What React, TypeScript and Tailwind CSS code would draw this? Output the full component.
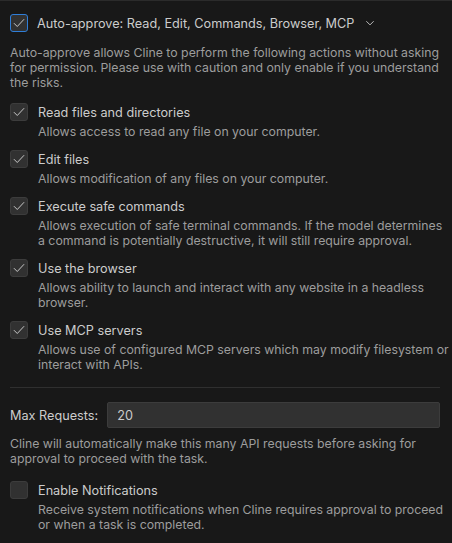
import React from 'react';

const items = [
  { label: 'Read files and directories', desc: ['Allows access to read any file on your computer.'], checked: true },
  { label: 'Edit files', desc: ['Allows modification of any files on your computer.'], checked: true },
  {
    label: 'Execute safe commands',
    desc: [
      'Allows execution of safe terminal commands. If the model determines',
      'a command is potentially destructive, it will still require approval.',
    ],
    checked: true,
  },
  {
    label: 'Use the browser',
    desc: ['Allows ability to launch and interact with any website in a headless', 'browser.'],
    checked: true,
  },
  {
    label: 'Use MCP servers',
    desc: ['Allows use of configured MCP servers which may modify filesystem or', 'interact with APIs.'],
    checked: true,
  },
];

const Check = () => (
  <svg width="14" height="14" viewBox="0 0 16 16" fill="none">
    <path d="M2.5 8.5l3.5 3.5 7.5-8" stroke="#cccccc" strokeWidth="1.1" strokeLinecap="round" strokeLinejoin="round" />
  </svg>
);

const Box: React.FC<{ checked?: boolean; focused?: boolean }> = ({ checked, focused }) => (
  <div
    className={`w-[18px] h-[18px] shrink-0 rounded-[3px] flex items-center justify-center bg-[#313131] border ${
      focused ? 'border-[#2f7ed8]' : 'border-[#3c3c3c]'
    }`}
  >
    {checked && <Check />}
  </div>
);

const Lines: React.FC<{ lines: string[]; className?: string }> = ({ lines, className = '' }) => (
  <p className={`text-[12.3px] text-[#9d9d9d] ${className}`}>
    {lines.map((l) => (
      <span key={l} className="block whitespace-nowrap">
        {l}
      </span>
    ))}
  </p>
);

export default function App() {
  return (
    <div
      className="w-[452px] h-[543px] bg-[#181818] border-t border-[#2b2b2b] pl-[10px] pr-[12px] pt-[12px] text-[12.7px] leading-[15px] overflow-hidden"
      style={{ fontFamily: 'Inter, "Noto Sans", sans-serif' }}
    >
      <div className="flex items-center h-[20px]">
        <Box checked focused />
        <span className="ml-[9px] text-[#cccccc]">Auto-approve: Read, Edit, Commands, Browser, MCP</span>
        <svg className="ml-[10px]" width="12" height="12" viewBox="0 0 16 16" fill="none">
          <path d="M3.5 6l4.5 4.5L12.5 6" stroke="#cccccc" strokeWidth="1.2" strokeLinecap="round" strokeLinejoin="round" />
        </svg>
      </div>
      <Lines
        className="mt-[12px]"
        lines={[
          'Auto-approve allows Cline to perform the following actions without asking',
          'for permission. Please use with caution and only enable if you understand',
          'the risks.',
        ]}
      />

      <div className="mt-[12px] flex flex-col gap-[10px]">
        {items.map((it) => (
          <div key={it.label}>
            <div className="flex items-center h-[20px]">
              <Box checked={it.checked} />
              <span className="ml-[10px] text-[#cccccc]">{it.label}</span>
            </div>
            <Lines className="mt-[2px] pl-[28px]" lines={it.desc} />
          </div>
        ))}
      </div>

      <div className="mt-[15px] h-px bg-[#2f2f2f]" />

      <div className="mt-[14px] flex items-center gap-[9px]">
        <span className="text-[#cccccc]">Max Requests:</span>
        <div className="flex-1 h-[26px] bg-[#313131] border border-[#3c3c3c] rounded-[2px] flex items-center px-[9px] text-[#cccccc]">
          20
        </div>
      </div>
      <Lines
        className="mt-[8px]"
        lines={[
          'Cline will automatically make this many API requests before asking for',
          'approval to proceed with the task.',
        ]}
      />

      <div className="mt-[14px]">
        <div className="flex items-center h-[20px]">
          <Box />
          <span className="ml-[10px] text-[#cccccc]">Enable Notifications</span>
        </div>
        <Lines
          className="mt-[2px] pl-[28px]"
          lines={[
            'Receive system notifications when Cline requires approval to proceed',
            'or when a task is completed.',
          ]}
        />
      </div>
    </div>
  );
}
